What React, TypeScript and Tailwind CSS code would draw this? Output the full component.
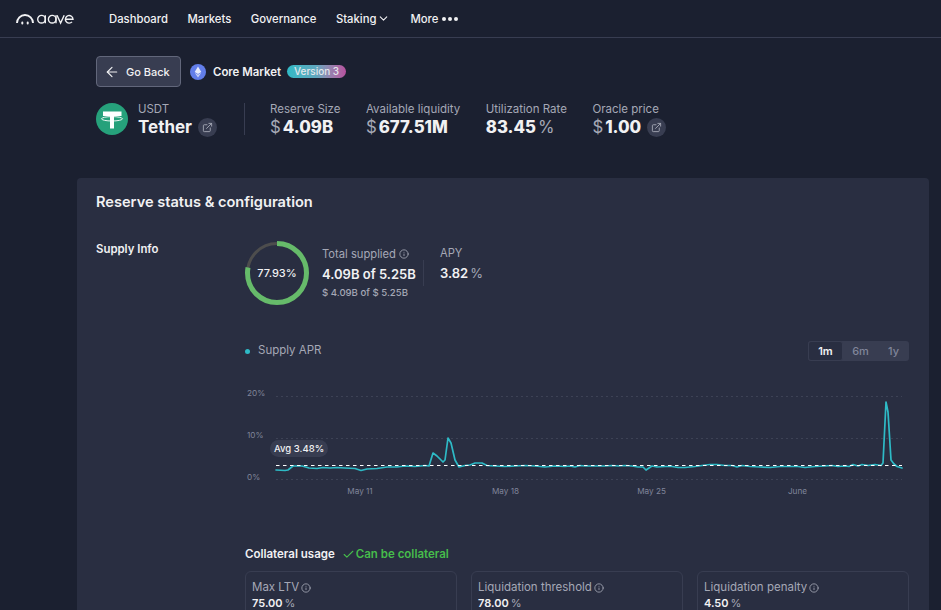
import React from "react";
import { ArrowLeft, ChevronDown, ExternalLink, Info, Check } from "lucide-react";

const line =
  "M276 470 L285 470.5 L288 470 L293 466 L302 466 L309 468 L317 468.5 L323 467.5 L330 468 L337 467.5 L345 468 L355 468.5 L361 470.5 L367 469 L377 468.5 L387 467 L397 467 L405 466 L415 466.5 L425 465.5 L429 466 L433 453 L437 456 L443 462 L445 460 L448 438 L451 443 L455 460 L459 467 L465 465.5 L470 465 L475 463 L482 463 L487 465.5 L495 466 L505 466.5 L515 466 L525 465.5 L535 466 L545 467 L555 466 L565 466.5 L570 466 L575 467 L580 465.5 L585 466 L595 466 L605 466 L612 465.5 L618 466 L625 465.5 L632 466 L638 467 L643 467 L646 470 L649 468 L652 466 L657 467 L665 466.5 L672 466.5 L678 467.5 L685 467.5 L695 466.5 L702 465.5 L710 464.5 L717 464.5 L725 465.5 L732 465.5 L737 467 L742 465.5 L750 466.5 L760 467 L770 467.5 L780 466.5 L790 466.5 L798 466.5 L805 467.5 L815 466.5 L825 466 L832 465.5 L838 466.5 L845 466 L849 466.5 L853 464.5 L858 466 L862 464.5 L868 465.5 L875 464.5 L881 465.5 L883 463 L886 402 L888 412 L891 460 L894 464 L897 466.5 L902 468";

function Stat({ label, children }: { label: string; children: React.ReactNode }) {
  return (
    <div className="flex flex-col">
      <span className="text-[11.5px] leading-[14px] text-[#A5A8B6]">{label}</span>
      <div className="flex h-[23px] items-center">{children}</div>
    </div>
  );
}

function Big({ prefix, value, suffix }: { prefix?: string; value: string; suffix?: string }) {
  return (
    <span className="flex items-baseline text-[16.8px] leading-[23px] font-extrabold text-[#F1F1F3]">
      {prefix && <span className="mr-[2px] font-normal text-[#A5A8B6]">{prefix}</span>}
      {value}
      {suffix && <span className="ml-[2px] font-normal text-[#A5A8B6]">{suffix}</span>}
    </span>
  );
}

function LinkIcon() {
  return (
    <span className="ml-[6px] flex h-[19px] w-[19px] items-center justify-center rounded-full bg-[#383D51]">
      <ExternalLink size={11} className="text-[#A5A8B6]" strokeWidth={2} />
    </span>
  );
}

function Tile({ label, value }: { label: string; value: string }) {
  return (
    <div className="h-[60px] rounded-md border border-[#383D51] px-[6px] pt-[7px]">
      <div className="flex items-center text-[11.5px] leading-[17px] text-[#A5A8B6]">
        {label}
        <Info size={10} className="ml-[2px]" />
      </div>
      <div className="flex items-baseline text-[11px] leading-[14px] font-semibold text-[#F1F1F3]">
        {value}
        <span className="ml-[2px] font-normal text-[#A5A8B6]">%</span>
      </div>
    </div>
  );
}

export default function App() {
  const navItems = ["Dashboard", "Markets", "Governance"];
  return (
    <div className="flex h-[610px] w-[941px] flex-col overflow-hidden bg-[#1B2030] font-['Inter',sans-serif] text-[#F1F1F3]">
      <header className="flex h-[38px] shrink-0 items-center border-b border-[#383D51] pl-[16px]">
        <svg width="58" height="12" viewBox="0 0 58 12" fill="none" stroke="#F1F1F3" strokeWidth="1.4" className="mr-[35px]">
          <path d="M1 10 A8 8 0 0 1 17 10" strokeWidth="1.9" />
          <path d="M6.3 10.5 v-1 M11.7 10.5 v-1" strokeWidth="2" strokeLinecap="round" />
          <circle cx="25.5" cy="6.2" r="3.8" />
          <path d="M29.3 2.2 V10.3" />
          <circle cx="36.2" cy="6.2" r="3.8" />
          <path d="M40 2.2 V10.3" />
          <path d="M41 2.2 L44.6 10 L48.2 2.2" />
          <path d="M49.6 6.2 H57 A3.8 3.8 0 1 0 56 8.9" />
        </svg>
        <nav className="flex items-center text-[11.3px] leading-[16px] font-medium text-[#F1F1F3]">
          {navItems.map((n) => (
            <span key={n} className="mr-[19.5px]">
              {n}
            </span>
          ))}
          <span className="mr-[20px] flex items-center">
            Staking
            <ChevronDown size={13} className="ml-[1px]" />
          </span>
          <span className="flex items-center">
            More
            <span className="ml-[4px] flex gap-[2px]">
              <i className="h-[4px] w-[4px] rounded-full bg-[#F1F1F3]" />
              <i className="h-[4px] w-[4px] rounded-full bg-[#F1F1F3]" />
              <i className="h-[4px] w-[4px] rounded-full bg-[#F1F1F3]" />
            </span>
          </span>
        </nav>
      </header>

      <main className="flex flex-col pl-[77px]">
        <div className="flex flex-col pl-[19px]">
          <div className="mt-[18px] flex h-[31px] items-center">
            <button className="flex h-[31px] w-[85px] items-center rounded-[4px] border border-[#62677B] bg-[#383D51] pl-[7px] text-[11px] leading-[16px] font-medium text-[#F1F1F3]">
              <ArrowLeft size={16} strokeWidth={1.75} className="mr-[6px]" />
              Go Back
            </button>
            <svg width="16" height="16" viewBox="0 0 16 16" className="ml-[9px]">
              <circle cx="8" cy="8" r="8" fill="#627EEA" />
              <path d="M8 2.5 L11.3 8 L8 10 L4.7 8 Z" fill="#FFFFFF" fillOpacity="0.85" />
              <path d="M8 10.7 L11.3 8.7 L8 13.5 L4.7 8.7 Z" fill="#FFFFFF" fillOpacity="0.65" />
            </svg>
            <span className="ml-[7px] text-[11.4px] leading-[16px] font-semibold">Core Market</span>
            <span className="ml-[6px] flex h-[13px] items-center rounded-full bg-gradient-to-r from-[#2EBAC6] via-[#5FA6BE] to-[#B6509E] px-[7px] text-[10px] leading-[13px] font-medium text-[#E4E7EB]">
              Version 3
            </span>
          </div>

          <div className="mt-[15px] flex items-start">
            <svg width="32" height="32" viewBox="0 0 32 32" className="mt-[1px]">
              <circle cx="16" cy="16" r="16" fill="#26A17B" />
              <path d="M7 8.5 H25.5 V13 H18 V25.5 H14 V13 H7 Z" fill="#FFFFFF" />
              <ellipse cx="16" cy="15.8" rx="10.5" ry="2.2" fill="none" stroke="#FFFFFF" strokeWidth="0.9" />
            </svg>
            <div className="ml-[10px] flex w-[80px] flex-col">
              <span className="text-[11.4px] leading-[14px] text-[#A5A8B6]">USDT</span>
              <div className="flex h-[23px] items-center">
                <span className="text-[17px] leading-[23px] font-bold">Tether</span>
                <LinkIcon />
              </div>
            </div>
            <div className="mt-[1px] ml-[26px] h-[32px] w-px bg-[#383D51]" />
            <div className="ml-[25px] flex gap-[25.5px]">
              <Stat label="Reserve Size">
                <Big prefix="$" value="4.09B" />
              </Stat>
              <Stat label="Available liquidity">
                <Big prefix="$" value="677.51M" />
              </Stat>
              <Stat label="Utilization Rate">
                <Big value="83.45" suffix="%" />
              </Stat>
              <Stat label="Oracle price">
                <span className="flex items-center">
                  <Big prefix="$" value="1.00" />
                  <LinkIcon />
                </span>
              </Stat>
            </div>
          </div>
        </div>

        <section className="mt-[39px] h-[450px] w-[852px] rounded-[4px] bg-[#292E41] pt-[14px] pr-[20px] pl-[19px]">
          <h2 className="text-[14.6px] leading-[20px] font-semibold">Reserve status &amp; configuration</h2>
          <div className="mt-[29px] flex">
            <div className="w-[149px] text-[11.4px] leading-[16px] font-semibold">Supply Info</div>
            <div className="flex flex-1 flex-col">
              <div className="flex h-[64px] items-center">
                <div className="relative h-[64px] w-[64px]">
                  <svg width="64" height="64" viewBox="0 0 64 64">
                    <circle cx="32" cy="32" r="29.5" fill="none" stroke="#4D4D4D" strokeWidth="3" />
                    <circle
                      cx="32"
                      cy="32"
                      r="29.5"
                      fill="none"
                      stroke="#66BB6A"
                      strokeWidth="5"
                      strokeDasharray="144.4 185.4"
                      transform="rotate(-90 32 32)"
                    />
                  </svg>
                  <span className="absolute inset-0 flex items-center justify-center text-[11px] font-medium text-[#F1F1F3]">
                    77.93%
                  </span>
                </div>
                <div className="ml-[13px] flex w-[101px] flex-col">
                  <span className="flex items-center text-[11.2px] leading-[14px] text-[#A5A8B6]">
                    Total supplied
                    <Info size={10} className="ml-[3px]" />
                  </span>
                  <span className="mt-[5px] text-[13px] leading-[16px] font-semibold">4.09B of 5.25B</span>
                  <span className="mt-[4px] text-[9.6px] leading-[14px] font-medium text-[#A5A8B6]">$ 4.09B of $ 5.25B</span>
                </div>
                <div className="h-[26px] w-px bg-[#383D51]" />
                <div className="mb-[19px] ml-[16px] flex flex-col self-center">
                  <span className="text-[11.2px] leading-[14px] text-[#A5A8B6]">APY</span>
                  <span className="mt-[5px] flex items-baseline text-[13px] leading-[16px] font-semibold">
                    3.82
                    <span className="ml-[2px] font-normal text-[#A5A8B6]">%</span>
                  </span>
                </div>
              </div>

              <div className="mt-[36px] flex h-[20px] items-center justify-between">
                <div className="flex items-center text-[11.5px] text-[#A5A8B6]">
                  <span className="h-[5px] w-[5px] rounded-full bg-[#2EBAC6]" />
                  <span className="ml-[8px]">Supply APR</span>
                </div>
                <div className="flex h-[20px] w-[101px] rounded-[3px] bg-[#383D51] text-[11px] leading-[18px] font-medium text-[#80859A]">
                  <span className="flex w-[35px] items-center justify-center rounded-[3px] border border-[#383D51] bg-[#292E41] font-semibold text-[#F1F1F3]">1m</span>
                  <span className="flex w-[35px] items-center justify-center">6m</span>
                  <span className="flex w-[31px] items-center justify-center">1y</span>
                </div>
              </div>

              <div className="relative mt-[24px] h-[115px] w-[664px]">
                <svg width="664" height="115" viewBox="245 385 664 115" className="block">
                  <g stroke="#42475B" strokeWidth="0.8" strokeDasharray="2 3">
                    <path d="M276 396.5 H902" />
                    <path d="M276 438.5 H902" />
                    <path d="M276 479.5 H902" />
                  </g>
                  <g fill="#80859A" fontSize="8.2" fontFamily="Inter, sans-serif">
                    <text x="247" y="396">20%</text>
                    <text x="247" y="438">10%</text>
                    <text x="247" y="480">0%</text>
                    <text x="360" y="494" textAnchor="middle">May 11</text>
                    <text x="505.5" y="494" textAnchor="middle">May 18</text>
                    <text x="651.5" y="494" textAnchor="middle">May 25</text>
                    <text x="797.5" y="494" textAnchor="middle">June</text>
                  </g>
                  <path d={line} fill="none" stroke="#2EBAC6" strokeWidth="1.7" strokeLinejoin="round" strokeLinecap="round" />
                  <path d="M276 465.5 H902" stroke="#FFFFFF" strokeWidth="1.1" strokeDasharray="3.5 3.5" />
                </svg>
                <span className="absolute top-[55px] left-[25px] rounded-full bg-[#383D51] px-[4px] text-[9.5px] leading-[17px] font-medium text-[#F1F1F3]">
                  Avg 3.48%
                </span>
              </div>

              <div className="mt-[46px] flex items-center text-[11.5px] leading-[16px]">
                <span className="font-semibold">Collateral usage</span>
                <Check size={13} className="ml-[7px] text-[#46BC4B]" />
                <span className="ml-[1px] font-semibold text-[#46BC4B]">Can be collateral</span>
              </div>
              <div className="mt-[9px] grid grid-cols-3 gap-[14px]">
                <Tile label="Max LTV" value="75.00" />
                <Tile label="Liquidation threshold" value="78.00" />
                <Tile label="Liquidation penalty" value="4.50" />
              </div>
            </div>
          </div>
        </section>
      </main>
    </div>
  );
}
